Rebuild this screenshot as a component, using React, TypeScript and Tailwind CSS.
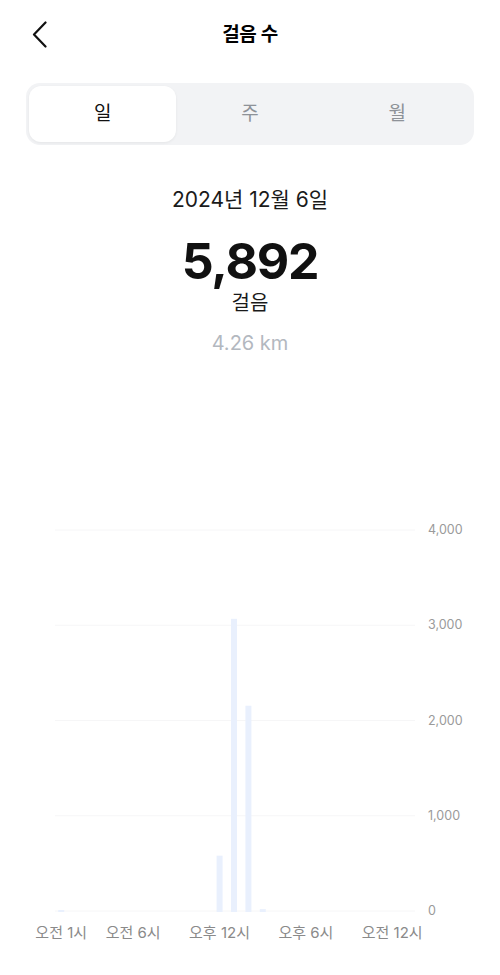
import React from "react";

const font = { fontFamily: '"Inter", "Noto Sans CJK KR", sans-serif' };

const bars: { i: number; v: number }[] = [
  { i: 0, v: 10 },
  { i: 11, v: 590 },
  { i: 12, v: 3070 },
  { i: 13, v: 2160 },
  { i: 14, v: 30 },
];

const xLabels: { i: number; t: string }[] = [
  { i: 0, t: "오전 1시" },
  { i: 5, t: "오전 6시" },
  { i: 11, t: "오후 12시" },
  { i: 17, t: "오후 6시" },
  { i: 23, t: "오전 12시" },
];

const colStart = [
  "col-start-1",
  "col-start-2",
  "col-start-3",
  "col-start-4",
  "col-start-5",
  "col-start-6",
  "col-start-7",
  "col-start-8",
  "col-start-9",
  "col-start-10",
  "col-start-11",
  "col-start-12",
  "col-start-13",
  "col-start-14",
  "col-start-15",
  "col-start-16",
  "col-start-17",
  "col-start-18",
  "col-start-19",
  "col-start-20",
  "col-start-21",
  "col-start-22",
  "col-start-23",
  "col-start-24",
];

export default function App() {
  const slot = 14.4;
  const x0 = 54;
  const baseY = 390;
  const top = 8;
  const scale = (baseY - top) / 4000;
  return (
    <div className="w-[500px] h-[975px] bg-white overflow-hidden text-black" style={font}>
      {/* Header */}
      <div className="relative h-[68px] flex items-center justify-center pt-[3px]">
        <div className="absolute left-[31px] top-[21px]">
          <svg width="18" height="28" viewBox="0 0 18 28">
            <polyline points="14.5,1.5 3,13.5 14.5,25.5" fill="none" stroke="#111" strokeWidth="2.2" strokeLinecap="round" strokeLinejoin="round" />
          </svg>
        </div>
        <div className="text-[19px] font-semibold tracking-tight">걸음 수</div>
      </div>

      {/* Segmented control */}
      <div className="mx-[26px] mt-[15px] h-[62px] rounded-[14px] bg-[#f2f3f5] p-[3px] flex">
        <div className="flex-1 rounded-[12px] bg-white shadow-[0_1px_3px_rgba(0,0,0,0.06)] flex items-center justify-center text-[19px] text-[#111]">
          일
        </div>
        <div className="flex-1 flex items-center justify-center text-[19px] text-[#8e9298]">주</div>
        <div className="flex-1 flex items-center justify-center text-[19px] text-[#8e9298]">월</div>
      </div>

      {/* Summary */}
      <div className="flex flex-col items-center">
        <div className="mt-[41px] text-[21px] leading-[28px] text-[#1a1a1a]">2024년 12월 6일</div>
        <div className="mt-[22px] text-[50px] leading-[50px] font-bold tracking-tight text-[#111]">5,892</div>
        <div className="mt-[4px] text-[20px] leading-[26px] text-[#1a1a1a]">걸음</div>
        <div className="mt-[14px] text-[20px] leading-[26px] text-[#b3b8bf]">4.26 km</div>
      </div>

      {/* Chart */}
      <div className="mt-[166px] flex">
        <svg width="420" height="400" className="shrink-0">
          {[0, 1, 2, 3, 4].map((k) => {
            const y = top + ((baseY - 1 - top) * k) / 4;
            return <line key={k} x1="55" x2="415" y1={y} y2={y} stroke="#f6f6f7" strokeWidth="1" />;
          })}
          {bars.map((b) => {
            const h = Math.max(2, b.v * scale);
            const cx = x0 + slot * b.i + slot / 2;
            return (
              <rect key={b.i} x={cx - 3} y={baseY - h} width="6" height={h} fill="#e9f0fd" />
            );
          })}
        </svg>
        <div className="h-[397px] flex flex-col justify-between pl-[8px] text-[12.5px] leading-4 text-[#9a9a9a]">
          <div>4,000</div>
          <div>3,000</div>
          <div>2,000</div>
          <div>1,000</div>
          <div>0</div>
        </div>
      </div>
      <div className="mt-[1px] pl-[54px] grid grid-cols-[repeat(24,14.4px)] text-[15px] leading-[20px] text-[#8a8a8a]">
        {xLabels.map((l) => (
          <div key={l.i} className={`${colStart[l.i]} row-start-1 flex justify-center`}>
            <span className="whitespace-nowrap">{l.t}</span>
          </div>
        ))}
      </div>
    </div>
  );
}
